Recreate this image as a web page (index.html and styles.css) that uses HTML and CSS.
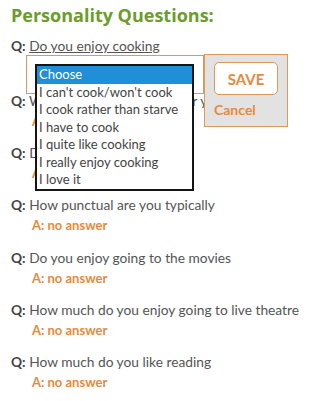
FILE: index.html
```html
<!DOCTYPE html>
<html lang="en">
<head>
  <meta charset="UTF-8" />
  <title>Personality Questions</title>
  <link rel="stylesheet" href="styles.css">
</head>
<body>
  <div class="questions">
    <h2 class="title">Personality Questions:</h2>

    <div class="qa editing">
      <div class="q"><b>Q:</b> <span class="qtext underline">Do you enjoy cooking</span></div>
      <div class="editor">
        <div class="select-box">
          <ul class="options">
            <li class="selected">Choose</li>
            <li>I can't cook/won't cook</li>
            <li>I cook rather than starve</li>
            <li>I have to cook</li>
            <li>I quite like cooking</li>
            <li>I really enjoy cooking</li>
            <li>I love it</li>
          </ul>
        </div>
        <div class="actions">
          <button class="save">SAVE</button>
          <a class="cancel">Cancel</a>
        </div>
      </div>
    </div>

    <div class="qa">
      <div class="q"><b>Q:</b> <span class="qtext">Would you want to cook for your family</span></div>
      <div class="a">A: no answer</div>
    </div>

    <div class="qa">
      <div class="q"><b>Q:</b> <span class="qtext">Do you like to bake</span></div>
      <div class="a">A: no answer</div>
    </div>

    <div class="qa">
      <div class="q"><b>Q:</b> <span class="qtext">How punctual are you typically</span></div>
      <div class="a">A: no answer</div>
    </div>

    <div class="qa">
      <div class="q"><b>Q:</b> <span class="qtext">Do you enjoy going to the movies</span></div>
      <div class="a">A: no answer</div>
    </div>

    <div class="qa">
      <div class="q"><b>Q:</b> <span class="qtext">How much do you enjoy going to live theatre</span></div>
      <div class="a">A: no answer</div>
    </div>

    <div class="qa">
      <div class="q"><b>Q:</b> <span class="qtext">How much do you like reading</span></div>
      <div class="a">A: no answer</div>
    </div>
  </div>
</body>
</html>
```

FILE: styles.css
```css
* { box-sizing: border-box; }
body {
  margin: 0;
  font-family: Lato, "Open Sans", sans-serif;
  background: #ffffff;
  color: #555;
}

.questions {
  padding-left: 11px;
}

.title {
  margin: 4px 0 9px;
  font-family: "Open Sans", sans-serif;
  font-size: 18px;
  line-height: 22px;
  font-weight: bold;
  color: #6b9c2c;
}

.qa {
  position: relative;
  padding-bottom: 10.4px;
}

.qa.editing {
  padding-bottom: 33.5px;
}

.q {
  font-size: 13.75px;
  line-height: 21px;
  color: #555;
}

.q b {
  color: #444;
}

.underline {
  text-decoration: underline;
}

.a {
  padding-left: 21px;
  font-size: 13px;
  line-height: 21px;
  font-weight: bold;
  color: #e8893a;
}

.editor {
  position: absolute;
  top: 20px;
  left: 15px;
  display: flex;
  align-items: flex-start;
  z-index: 10;
}

.select-box {
  position: relative;
  width: 178px;
  height: 39px;
  border: 1px solid #dc9a5a;
  background: #fff;
}

.options {
  position: absolute;
  top: 8px;
  left: 8px;
  width: 159px;
  margin: 0;
  padding: 0;
  list-style: none;
  border: 2px solid #151515;
  background: #fff;
  font-size: 13px;
  color: #444;
}

.options li {
  height: 17.5px;
  line-height: 17.5px;
  padding-left: 2px;
}

.options .selected {
  background: #1f8fd8;
  color: #fff;
}

.actions {
  width: 84px;
  height: 73px;
  margin-top: -1px;
  border: 1px solid #dc9a5a;
  background: #e2e2e2;
  padding: 7px 0 0 9px;
}

.save {
  display: block;
  width: 64px;
  height: 33px;
  border: 1px solid #dc9a5a;
  border-radius: 5px;
  background: #fff;
  color: #e8893a;
  font-family: inherit;
  font-size: 15px;
  font-weight: bold;
  padding: 0;
}

.cancel {
  display: block;
  margin-top: 6px;
  font-size: 14px;
  font-weight: bold;
  color: #e8893a;
}
```
